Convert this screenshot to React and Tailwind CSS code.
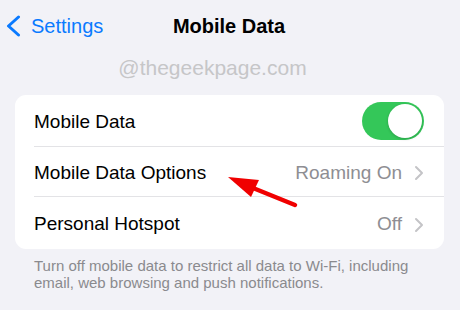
import React from 'react';

const font = { fontFamily: '"Liberation Sans", Arial, sans-serif' };

function Chevron() {
  return (
    <svg width="10" height="16" viewBox="0 0 10 16" className="shrink-0">
      <polyline points="2,2 8,8 2,14" fill="none" stroke="#c4c4c7" strokeWidth="2" strokeLinecap="round" strokeLinejoin="round" />
    </svg>
  );
}

function Row({ label, value, children, last, height }) {
  return (
    <div className={`flex items-stretch pl-[19px] ${height}`}>
      <div className={`flex-1 flex items-center justify-between pr-[20px] ${last ? '' : 'border-b border-[#e3e3e6]'}`}>
        <span className="text-[19px] text-black pt-[3px]">{label}</span>
        {children ? children : (
          <div className="flex items-center gap-[12px] pt-[3px]">
            <span className="text-[19px] text-[#8e8e93]">{value}</span>
            <Chevron />
          </div>
        )}
      </div>
    </div>
  );
}

export default function App() {
  return (
    <div className="relative w-[460px] h-[310px] bg-[#f2f2f7] overflow-hidden" style={font}>
      {/* Nav bar */}
      <div className="relative h-[52px] flex items-center">
        <div className="flex items-center pl-[6px] gap-[10px] text-[#0a7aff]">
          <svg width="15" height="22" viewBox="0 0 15 22">
            <polyline points="12.5,2 2.5,11 12.5,20" fill="none" stroke="#0a7aff" strokeWidth="3" strokeLinecap="round" strokeLinejoin="round" />
          </svg>
          <span className="text-[20px]">Settings</span>
        </div>
        <div className="absolute left-0 right-0 flex justify-center pointer-events-none">
          <span className="text-[20px] font-bold text-black ml-[-2px]">Mobile Data</span>
        </div>
      </div>

      {/* Watermark */}
      <div className="h-[32px] flex items-center justify-center">
        <span className="text-[21px] text-[#c6c6c8] ml-[-35px]">@thegeekpage.com</span>
      </div>

      {/* Card */}
      <div className="mt-[11px] ml-[15px] mr-[16px] bg-white rounded-[11px] flex flex-col">
        <Row label="Mobile Data" height="h-[52px]">
          <div className="w-[62px] h-[38px] rounded-full bg-[#34c759] flex items-center justify-end pr-[2px]">
            <div className="w-[34px] h-[34px] rounded-full bg-white shadow-[0_1px_3px_rgba(0,0,0,0.2)]" />
          </div>
        </Row>
        <Row label="Mobile Data Options" value="Roaming On" height="h-[50px]" />
        <Row label="Personal Hotspot" value="Off" height="h-[52px]" last />
      </div>

      {/* Footer */}
      <p className="mt-[8px] pl-[34px] pr-[20px] text-[15px] leading-[17px] text-[#8a8a8e]">
        Turn off mobile data to restrict all data to Wi-Fi, including email, web browsing and push notifications.
      </p>

      {/* Red annotation arrow */}
      <svg className="absolute left-0 top-0 pointer-events-none" width="460" height="310" viewBox="0 0 460 310">
        <line x1="253" y1="188" x2="295" y2="205" stroke="#f00000" strokeWidth="4.5" strokeLinecap="round" />
        <polygon points="228,177 259,180 251,197" fill="#f00000" />
      </svg>
    </div>
  );
}
